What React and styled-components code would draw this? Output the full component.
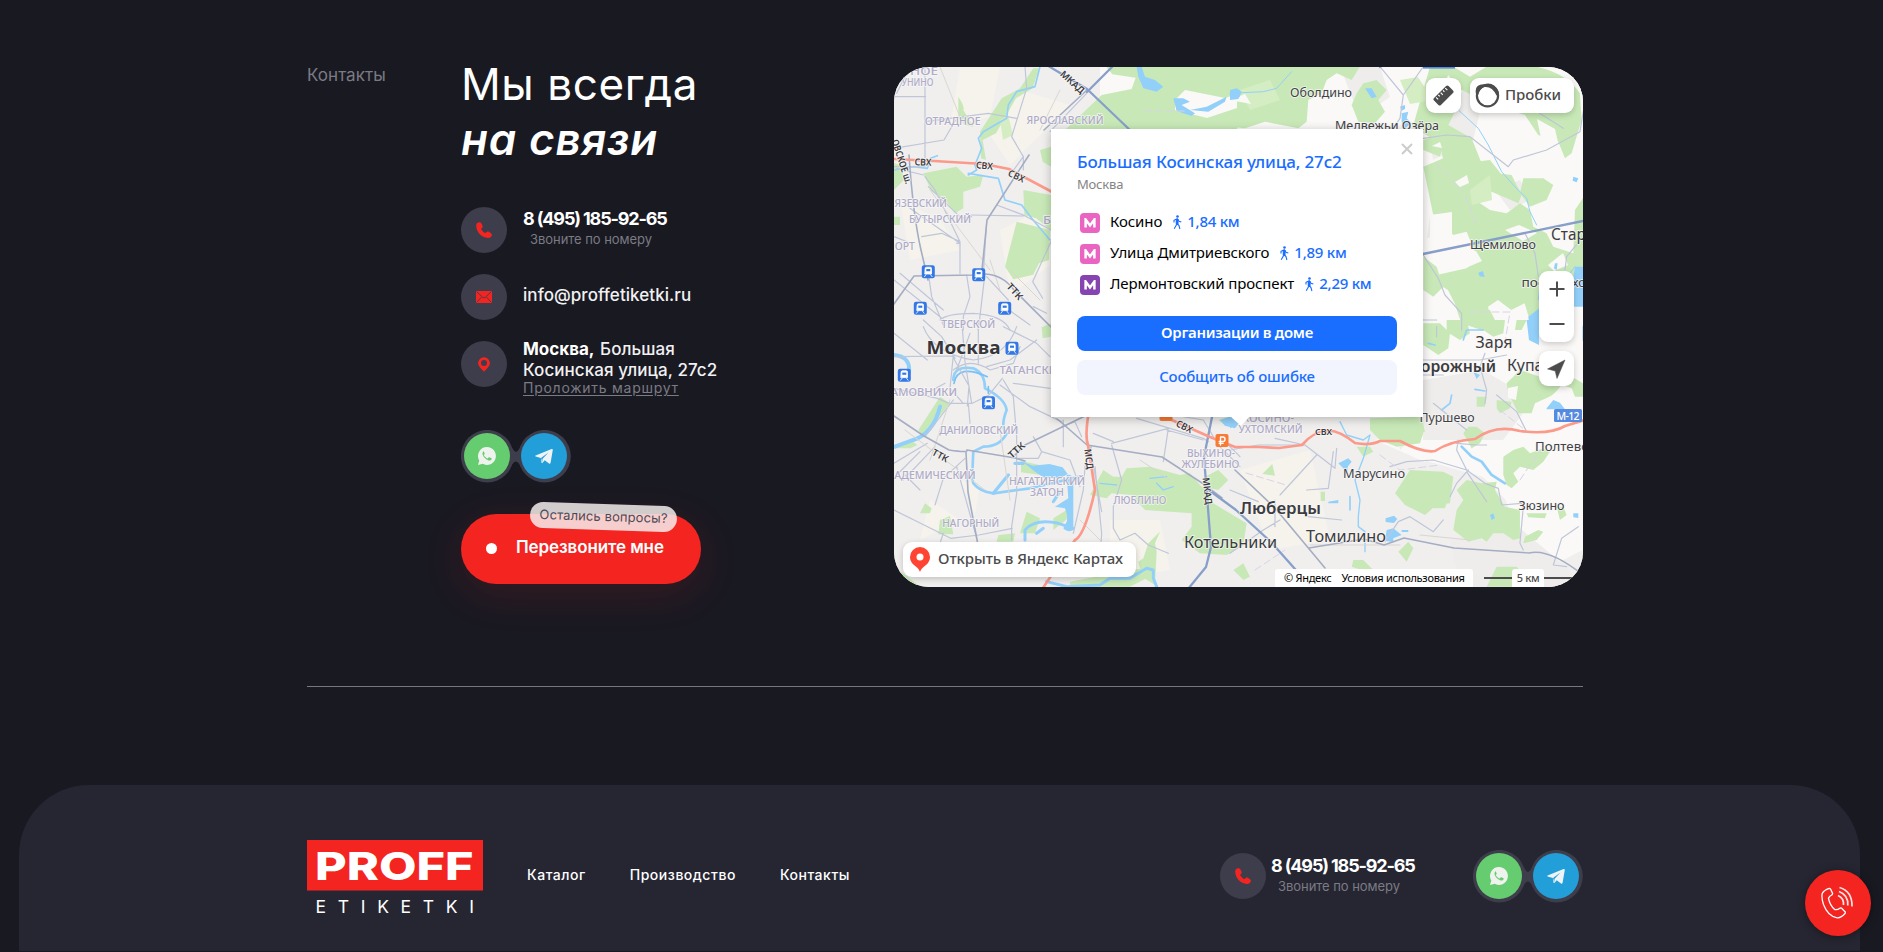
import React from "react";
import styled, { createGlobalStyle } from "styled-components";

const Global = createGlobalStyle`
  * { box-sizing: border-box; }
  body { margin: 0; background: #191922; font-family: Inter, "Liberation Sans", sans-serif; color: #fff; overflow: hidden; }
  h1, p { margin: 0; }
  a { color: inherit; text-decoration: none; }
  svg { display: block; }
`;

const Page = styled.div`
  width: 1883px;
  height: 952px;
  overflow: hidden;
  display: flex;
  flex-direction: column;
`;

const Contacts = styled.section`
  width: 1276px;
  margin-left: 307px;
  padding: 56px 0 99px;
  display: grid;
  grid-template-columns: 154px 433px 689px;
  border-bottom: 1px solid #777780;
`;

const SectionLabel = styled.p`
  margin-top: 9px;
  font-size: 17px;
  line-height: 20px;
  letter-spacing: 0.05px;
  color: #7b7b84;
`;

const Info = styled.div`
  display: flex;
  flex-direction: column;
  align-items: flex-start;
`;

const Heading = styled.h1`
  padding-top: 1px;
  font-size: 44px;
  line-height: 55px;
  font-weight: 400;
  height: 112px;
  white-space: nowrap;
  letter-spacing: 0.6px;
  em { display: block; font-weight: 600; letter-spacing: 0.8px; }
`;

const ContactList = styled.div`
  margin-top: 39px;
  display: flex;
  flex-direction: column;
  gap: 21px;
`;

const ContactRow = styled.div`
  display: flex;
  gap: ${(p) => p.$gap || 16}px;
  height: 46px;
`;

const IconDisc = styled.span`
  flex: none;
  width: 46px;
  height: 46px;
  border-radius: 50%;
  background: #3d3d4b;
  display: flex;
  align-items: center;
  justify-content: center;
`;

const ContactText = styled.div`
  white-space: nowrap;
  margin-top: ${(p) => p.$top || 0}px;
`;

const Phone = styled.a`
  display: block;
  font-size: 18px;
  line-height: 22px;
  font-weight: 700;
  letter-spacing: -1.15px;
`;

const PhoneNote = styled.span`
  display: block;
  padding-left: 7px;
  font-size: 13px;
  line-height: 18px;
  letter-spacing: -0.05px;
  color: #7b7b84;
`;

const ContactLine = styled.a`
  display: block;
  font-size: 17px;
  line-height: 21px;
  font-weight: 500;
  letter-spacing: 0.06px;
  color: #f1f1f2;
  b { font-weight: 700; letter-spacing: 0; margin-right: 1px; color: #fff; }
`;

const RouteLink = styled.a`
  display: block;
  width: max-content;
  margin-top: -1px;
  font-size: 14px;
  line-height: 16px;
  letter-spacing: 0.74px;
  color: #7b7b84;
  text-decoration: underline;
  text-underline-offset: 2px;
`;

const SocialPill = styled.div`
  position: relative;
  display: flex;
  gap: 11px;
  padding: 3px;
  width: 110px;
  height: 53px;
  margin-top: ${(p) => p.$top || 0}px;
`;

const SocialBack = styled.svg`
  position: absolute;
  inset: 0;
`;

const SocialLink = styled.a`
  position: relative;
  width: 46px;
  height: 46px;
  border-radius: 50%;
  background: ${(p) => p.$color};
  display: flex;
  align-items: center;
  justify-content: center;
`;

const CallButton = styled.button`
  position: relative;
  margin-top: 31px;
  width: 240px;
  height: 70px;
  padding: 0 0 4px 25px;
  border: 0;
  border-radius: 35px;
  background: #f42521;
  box-shadow: 0 10px 42px rgba(244, 37, 33, 0.14);
  display: flex;
  align-items: center;
  gap: 19px;
  font: 600 17px Inter, sans-serif;
  letter-spacing: -0.1px;
  color: #fff;
  white-space: nowrap;
`;

const Dot = styled.i`
  width: 11px;
  height: 11px;
  border-radius: 50%;
  background: #fff;
  margin-top: 3px;
`;

const Question = styled.span`
  position: absolute;
  left: 69px;
  top: -10px;
  width: 147px;
  height: 26px;
  border-radius: 13px;
  background: rgba(246, 240, 241, 0.83);
  transform: rotate(1.8deg);
  font-size: 13px;
  font-weight: 400;
  line-height: 24px;
  letter-spacing: 0.1px;
  text-align: center;
  color: #4d4a55;
`;

const MapFrame = styled.div`
  position: relative;
  width: 689px;
  height: 520px;
  margin-top: 11px;
  border-radius: 35px;
  overflow: hidden;
  background: #f0efee;
  font-family: "Noto Sans", "Liberation Sans", sans-serif;
  color: #4c4c4c;
`;

const MapPanel = styled.div`
  position: absolute;
  left: ${(p) => p.$x}px;
  top: ${(p) => p.$y}px;
  width: ${(p) => p.$w}px;
  height: ${(p) => p.$h}px;
  background: #fff;
  border-radius: 9px;
  box-shadow: 0 2px 6px rgba(0, 0, 0, 0.2);
  display: flex;
  flex-direction: ${(p) => (p.$column ? "column" : "row")};
  align-items: center;
  justify-content: ${(p) => (p.$start ? "flex-start" : "space-around")};
  gap: ${(p) => p.$gap || 0}px;
  padding: ${(p) => p.$pad || "0"};
  font-size: 15px;
  font-weight: 500;
  letter-spacing: -0.08px;
  white-space: nowrap;
`;

const PanelText = styled.span`
  margin-top: -3px;
`;

const Balloon = styled.div`
  position: absolute;
  left: 157px;
  top: 62px;
  width: 372px;
  height: 288px;
  padding: 21px 26px;
  background: #fff;
  color: #000;
  box-shadow: 0 2px 9px rgba(0, 0, 0, 0.25);
  display: flex;
  flex-direction: column;
  &::after {
    content: "";
    position: absolute;
    left: 179px;
    bottom: -9px;
    width: 20px;
    height: 10px;
    background: #fff;
    clip-path: polygon(0 0, 100% 0, 55% 100%);
  }
`;

const CloseIcon = styled.svg`
  position: absolute;
  right: 10px;
  top: 14px;
`;

const BalloonTitle = styled.p`
  font-size: 17px;
  line-height: 24px;
  font-weight: 500;
  letter-spacing: -0.14px;
  color: #196dff;
`;

const BalloonCity = styled.p`
  font-size: 13px;
  line-height: 20px;
  color: #848484;
  letter-spacing: -0.2px;
`;

const MetroList = styled.div`
  margin-top: 13px;
`;

const MetroRow = styled.div`
  display: flex;
  align-items: center;
  height: 31px;
  font-size: 15px;
  letter-spacing: -0.1px;
  padding-left: 3px;
`;

const MetroName = styled.span`
  margin: -4px 11px 0 10px;
`;

const MetroMark = styled.span`
  width: 20px;
  height: 20px;
  border-radius: 4px;
  background: ${(p) => p.$color};
  display: flex;
  align-items: center;
  justify-content: center;
`;

const Distance = styled.span`
  color: #196dff;
  font-weight: 500;
  letter-spacing: -0.25px;
  margin: -4px 0 0 5px;
`;

const BalloonButton = styled.a`
  height: 35px;
  width: 320px;
  margin-top: ${(p) => p.$top}px;
  border-radius: 8px;
  background: ${(p) => (p.$primary ? "#196dff" : "#f2f5fe")};
  color: ${(p) => (p.$primary ? "#fff" : "#196dff")};
  font-size: 15px;
  font-weight: ${(p) => (p.$primary ? 600 : 500)};
  letter-spacing: ${(p) => (p.$primary ? -0.3 : -0.2)}px;
  line-height: 33px;
  text-align: center;
`;

const Copyright = styled.div`
  position: absolute;
  left: 381px;
  bottom: 0;
  width: 198px;
  height: 18px;
  padding-left: 9px;
  border-radius: 3px 3px 0 0;
  background: rgba(255, 255, 255, 0.93);
  display: flex;
  gap: 10px;
  color: #000;
  font-size: 11px;
  line-height: 18px;
  letter-spacing: -0.27px;
  white-space: nowrap;
`;

const Scale = styled.div`
  position: absolute;
  left: 590px;
  bottom: 0;
  width: 98px;
  height: 18px;
  display: flex;
  align-items: center;
  font-size: 11px;
  font-weight: 500;
  letter-spacing: -0.4px;
  span { width: 32px; text-align: center; background: #fff; line-height: 18px; border-radius: 3px 3px 0 0; }
  i { height: 2px; width: 28px; background: #4c4c4c; }
`;

const Footer = styled.footer`
  flex: none;
  margin: 98px 23px 0 19px;
  height: 166px;
  padding: 55px 277px 0 288px;
  border-radius: 70px 70px 0 0;
  background: #262632;
  display: flex;
  align-items: flex-start;
`;

const Nav = styled.nav`
  display: flex;
  gap: 44px;
  margin: 25px 0 0 44px;
  a { font-size: 14px; line-height: 20px; font-weight: 500; letter-spacing: 0.53px; white-space: nowrap; }
`;

const FooterPhone = styled.div`
  width: 196px;
  margin: 13px 57px 0 auto;
`;

const CallFab = styled.button`
  position: fixed;
  left: 1805px;
  top: 870px;
  width: 66px;
  height: 66px;
  padding: 0;
  border: 0;
  border-radius: 50%;
  background: #f42521;
  box-shadow: 0 1px 9px rgba(0, 0, 0, 0.4);
  display: flex;
  align-items: center;
  justify-content: center;
`;

const PhoneIcon = () => (
  <svg width="18" height="18" viewBox="0 0 18 18" fill="#f42521">
    <path d="M4.6 1.2C2.8 1 1.3 2.3 1.2 4.3c-.1 6.6 5.200 12.300 11.700 12.600 2.100 0 3.700-1.200 4-3 .1-.5 0-.9-.4-1.200l-2.600-1.900c-.6-.4-1.300-.4-1.900 0l-1.300 1c-.4.3-.8.3-1.200 0A10 10 0 0 1 6.300 8.500c-.2-.4-.1-.8.2-1.100l.9-.9c.4-.5.5-1.100.2-1.700L6.100 2C5.800 1.400 5.300 1.200 4.600 1.200z" />
  </svg>
);

const MailIcon = () => (
  <svg width="16" height="12" viewBox="0 0 16 12">
    <rect width="16" height="12" rx="1" fill="#f42521" />
    <path d="M.8.8 6.700 6.300q1.300 1.100 2.600 0L15.200.8M.8 11.200l4.600-5M15.200 11.200l-4.600-5" fill="none" stroke="#3d3d4b" strokeWidth=".9" />
  </svg>
);

const PinIcon = () => (
  <svg width="12" height="15" viewBox="0 0 12 15">
    <path d="M6 .3a5.800 5.800 0 0 0-5.900 5.800C.1 9.700 3.800 12 6 14.800 8.200 12 11.900 9.700 11.900 6.100A5.800 5.800 0 0 0 6 .3zM6 8.900a3 3 0 1 1 0-6 3 3 0 0 1 0 6z" fill="#f42521" />
  </svg>
);

const Socials = ({ top }) => (
  <SocialPill $top={top}>
    <SocialBack width="110" height="53">
      <g fill="#3d3d4b">
        <circle cx="26.200" cy="26.200" r="26.300" />
        <circle cx="83.500" cy="26.200" r="26.300" />
        <path d="M47 11Q53 22 55 22t8-11v31q-5-10-8-10.500T47 42z" />
      </g>
    </SocialBack>
    <SocialLink $color="#66cc70">
      <svg width="18" height="18" viewBox="0 0 18 18">
        <path d="M9 .1A8.900 8.900 0 0 0 1.300 13.500L0 18l4.700-1.200A8.900 8.900 0 1 0 9 .1z" fill="#eef3ee" />
        <path d="M5.600 4.500c-1.100.8-1.400 2-.9 3.300 1 2.700 3.200 4.900 5.900 5.700 1.300.3 2.500-.1 3-1.200.2-.5.200-1-.1-1.100l-2.100-1c-.3-.1-.6-.1-.8.2l-.7.9c-.2.2-.4.2-.7.100-1.500-.7-2.600-1.700-3.300-3.100-.1-.3 0-.4.1-.6l.6-.8c.1-.2.1-.4 0-.6l-.8-1.700c-.1-.3-.7-.3-1.200-.1z" fill="#66cc70" />
      </svg>
    </SocialLink>
    <SocialLink $color="#229ed9">
      <svg width="18" height="15" viewBox="0 0 18 15">
        <path d="M.6 6.600 16.600.1c.8-.3 1.300.2 1.200.9L15.600 13.800c-.2.800-.8 1.200-1.600.7L9.700 11.300l-2.100 2.400c-.5.500-1 .4-1.100-.3l-.7-4.500L.7 7.600C.1 7.400 0 6.900.6 6.600z" fill="#eef3f6" />
        <path d="M6 9 13.500 3.600 7.600 9.700l-.4 3.300z" fill="#229ed9" />
      </svg>
    </SocialLink>
  </SocialPill>
);

const PhoneBlock = ({ gap, top }) => (
  <ContactRow $gap={gap}>
    <IconDisc><PhoneIcon /></IconDisc>
    <ContactText $top={top}>
      <Phone href="#">8 (495) 185-92-65</Phone>
      <PhoneNote>Звоните по номеру</PhoneNote>
    </ContactText>
  </ContactRow>
);

const Walker = () => (
  <svg width="9" height="15" viewBox="0 0 9 15" fill="none" stroke="#196dff" strokeWidth="1.100">
    <circle cx="4.500" cy="1.500" r="1.300" fill="#196dff" stroke="none" />
    <path d="M1 7.500V5.300L4.300 3.800 6 6.200l2.300.9M4.300 4l-.4 5L1.200 13.800M4 8.500l2 2 .9 3.500" />
    <path d="M3.300 4.500h1.700v4.300H3.300z" fill="#196dff" />
  </svg>
);

const stations = [
  { name: "Косино", km: "1,84 км", color: "#e965c1" },
  { name: "Улица Дмитриевского", km: "1,89 км", color: "#e965c1" },
  { name: "Лермонтовский проспект", km: "2,29 км", color: "#8544b0" },
];

/* kind, centre x, baseline y, width, text, rotation */
const labels = [
  ["area", 924, 75, 28, "НОЕ"],
  ["area", 917.500, 86.300, 32, "УНИНО"],
  ["area", 952.700, 125.300, 56, "ОТРАДНОЕ"],
  ["area", 1065, 124, 77, "ЯРОСЛАВСКИЙ"],
  ["area", 917, 206.700, 60, "НЯЗЕВСКИЙ"],
  ["area", 940, 223.300, 62, "БУТЫРСКИЙ"],
  ["area", 901, 250, 28, "ПОРТ"],
  ["area", 1052, 224, 18, "БО"],
  ["area", 968.300, 328, 54, "ТВЕРСКОЙ"],
  ["area", 1033, 374, 67, "ТАГАНСКИЙ"],
  ["area", 920.500, 396, 73, "ХАМОВНИКИ"],
  ["area", 978.700, 434, 79, "ДАНИЛОВСКИЙ"],
  ["area", 928, 478.700, 95, "АКАДЕМИЧЕСКИЙ"],
  ["area", 1047, 484.700, 76, "НАГАТИНСКИЙ"],
  ["area", 1047, 495.700, 34, "ЗАТОН"],
  ["area", 1140, 503.700, 53, "ЛЮБЛИНО"],
  ["area", 970.800, 527, 57, "НАГОРНЫЙ"],
  ["area", 1211, 457, 48, "ВЫХИНО-"],
  ["area", 1210.500, 468, 58, "ЖУЛЕБИНО"],
  ["area", 1268, 422, 52, "КОСИНО-"],
  ["area", 1270.500, 433, 64, "УХТОМСКИЙ"],
  ["town", 1321, 96.500, 62, "Оболдино"],
  ["town", 1387, 129.800, 104, "Медвежьи Озёра"],
  ["town", 1503, 248.500, 66, "Щемилово"],
  ["town", 1535, 286.500, 27, "пос."],
  ["town", 1582, 286.500, 20, "хоз"],
  ["town", 1447, 422.300, 55, "Пуршево"],
  ["town", 1374, 478, 62, "Марусино"],
  ["town", 1541.500, 510, 46, "Зюзино"],
  ["town", 1562, 450.700, 54, "Полтево"],
  ["city", 1577, 239.500, 52, "Старая"],
  ["city", 1494, 348, 37, "Заря"],
  ["city", 1539, 370.700, 64, "Купавна"],
  ["city", 1230.500, 547.500, 93, "Котельники"],
  ["city", 1346, 542.300, 80, "Томилино"],
  ["bold", 1418.500, 371.500, 155, "Железнодорожный"],
  ["bold", 1280.500, 514, 81, "Люберцы"],
  ["capital", 963.500, 354, 74, "Москва"],
  ["road", 923, 165.500, 17, "СВХ", 2],
  ["road", 984.500, 169, 17, "СВХ", 5],
  ["road", 1016.500, 179.500, 17, "СВХ", 25],
  ["road", 1184.500, 430, 17, "СВХ", 27],
  ["road", 1323.500, 435, 17, "СВХ"],
  ["road", 1072.500, 85.500, 29, "МКАД", 42],
  ["road", 902, 165, 46, "ОВСКОЕ ш.", 72],
  ["road", 1015, 295, 19, "ТТК", 48],
  ["road", 940.500, 459, 17, "ТТК", 28],
  ["road", 1016.500, 453.500, 19, "ТТК", -42],
  ["road", 1089, 462.500, 20, "МСД", 82],
  ["road", 1207.500, 494.500, 27, "МКАД", 83],
];

const labelStyle = {
  area: { size: 11, weight: 500, fill: "#aeaac7" },
  town: { size: 13, weight: 400, fill: "#424247" },
  city: { size: 15.800, weight: 400, fill: "#3c3c41" },
  bold: { size: 15.800, weight: 600, fill: "#3c3c41" },
  capital: { size: 18.500, weight: 700, fill: "#36363b" },
  road: { size: 9.600, weight: 600, fill: "#3c3c42" },
};

const MapLabel = ({ item: [kind, x, y, w, text, angle = 0] }) => {
  const s = labelStyle[kind];
  const pivot = kind === "road" ? y - 3.500 : y;
  return (
    <text
      x={x} y={y} textAnchor="middle" textLength={w} lengthAdjust="spacingAndGlyphs"
      transform={angle ? `rotate(${angle} ${x} ${pivot})` : undefined}
      fontSize={s.size} fontWeight={s.weight} fill={s.fill}
      stroke="#f8f7f6" strokeWidth="1.800" strokeOpacity=".75" paintOrder="stroke" strokeLinejoin="round"
    >
      {text}
    </text>
  );
};

const Train = ({ x, y }) => (
  <g transform={`translate(${x} ${y})`}>
    <rect x="-6.500" y="-6.500" width="13" height="13" rx="2.200" fill="#3478e5" />
    <path d="M-3.200-3.200q0-1.300 1.300-1.300h3.800q1.300 0 1.300 1.300v5.500h-6.400zM-2.300 3l-1.500 2M2.300 3l1.500 2" fill="#fff" stroke="#fff" strokeWidth=".8" />
    <path d="M-2-2.700h4v2.200h-4z" fill="#3478e5" />
  </g>
);

const trains = [[928.300, 271.700], [978.700, 274.700], [920.300, 308.300], [1004.700, 308.300], [1012, 348.300], [904.300, 375.300], [988.500, 402.700]];

const MapArt = () => (
  <svg width="689" height="520" viewBox="894 67 689 520" strokeLinejoin="round" strokeLinecap="round">
    <rect x="894" y="67" width="689" height="520" fill="#f0efee" />

    {/* open land and built-up tints */}
    <g fill="#faf9f7">
      <path d="M1100 67h483v300h-483zM1423 367h160v130l-40 40-60-60-70-20z" />
      <path d="M1480 430l60 10 43 50v60l-40 20-30-50zM1375 440l50-14 30 14-30 22z" />
    </g>
    <g fill="#f5f3ec">
      <path d="M960 67l40 0-10 50-40 10zM1020 90l50 15-60 60-20-30zM900 200l40 20 20 30-50 10zM1000 230l50-25v60l-40 30z" />
      <path d="M930 500l30 20-40 20zM960 480l20 5-5 30zM1110 520l50 0 10 50-60 10zM1240 470l70-20 20 90-60 10z" />
    </g>
    <g fill="#efedec">
      <path d="M1423 110h30l10-20 20 10-10 40-40 20zM1423 380l60-10 50 30-30 40-80 0zM1430 215l22 0v18l-25 5zM1495 190l25-10 10 20-20 10zM1340 67h40l10 30-30 20zM1450 540l60-20 60 50v17h-110zM1390 400l30 30-20 20z" />
    </g>

    {/* forests and parks */}
    <g fill="#c8e9b7">
      <g transform="translate(890 60) scale(.3333)">
        <path d="M640 20l420 0v130l-20 60H525l110-105 90-18 12-34-70-10-20-25zM12 310l20 5 10 45-30 30zM100 340l100-20 30 30 50-5-10 35-50 15v50l-25 15-30-40-40-25zM380 485l100 25-3 90-30 10-17 34-60 14-25-38zM400 390l83 15v105l-45-35-35-10zM450 270l33-10v60l-25-15zM205 110q20 30 15 40l30 50-25-5-20-20zM270 215l65-100 55-30 40-60 18 0-20 60-50 30-60 105-40 20 10 60-15-5zM12 470l18 0v25l-18 0z" />
      </g>
      <g transform="translate(1230 60) scale(.3333)">
        <path d="M0 20h390l-25 40-45-20-30 20-15 40-40 20-5 65-25 20-100-20-60 20-45-5zM400 70l40-10 30 30-25 30 20 35-30 35-50-5-20-50 15-35zM600 20h70l50 30 50-30h150q90 20 130 80l5 80-30 100-20 15-20-50-60-20-40-60-100-30-100-50-30-40-20 40 40 70-20 40 70 40 40 100 80 10 30 60-10 25-80-35-60 5-20-50-60-20-15-80-50-30-40 10zM580 240l30-10 30 20-10 40-50-20zM580 320l60-25 60 15 80-10 40 50 0 30-50 10-20 40 30 20 50 10 40-30 30 20 10 50 40 20 20 40 60 20 5-130 30-45 44 0v50l-29 35 29 80v-40 135l-60 20-60 25-20 60-20 30-50-20-15-50-40 20-40-30-30 20 10 40-30 30-60-20-20-60-20-40-34-20v-25l90-20 35-30-15-30-20-50-40 10-20-20-30 10zM880 355l60 0 30 20-20 45-50 20-30-40zM580 590l40 30 20 60-30 30-30-20zM700 755l80-5 30 60h-60l-50-25z" />
      </g>
      <g transform="translate(890 320) scale(.3333)">
        <path d="M150 230l30 20-80 100-15-20zM12 375l50-15 20 15-20 10h-50zM105 550l20 15-5 15h-30zM150 600l30-12 10 55-45 0zM410 575l40 20-15 45-45 0zM375 640l-5 25-50 0 5-20zM455 22l28-12v40l-25 5zM393 422l130 30-20 20-110-15zM490 595l40-25 10 20-50 40zM640 450l30 20 25 0 15-25 70-5 90 25 30-5 30 35 30 25 10 30 100 60-10 65-50 30-80-5-55-40 30-40 0-40-140-10-40-45-60-5-15 15-50-10zM945 470l40-20 30 30-30 30-45-10zM775 670l30-30 5-5-15 35 5 25-5 100-40-25-10-45 15-10zM12 740l80 60h-70z" />
        <path d="M540 785l180-35 50-5 0 30-50 25h-180zM985 300l30-10 20 10-30 15z" />
      </g>
      <g transform="translate(1230 320) scale(.3333)">
        <path d="M580 10h50l30 30-5 45-30 20-45-30zM740 0l85 0-5 40-30 10-30-20zM650 0l60 0 10 40-30 20-40-25zM420 330l0-35 130-5 30 50-10 30-70 10-50-20zM520 290h55l10 45-40 15zM380 380l40 0 10 15-30 15zM830 190l40-40 60 20h40l20-20 70 40v40l-25 0-10-25-30-10-25 30-55 25-10 30h-40l-30-60zM740 230l30 0-5 30-25 0zM800 240l45 5-5 20-30 15-10-15zM700 340l15-20 25 0 25 20-15 30-25 15zM820 410l30-20 30-10 20 20 40-15 20 10-20 30-30 25-40-10-20 20 15 25-20 20-15-10-10-30zM540 450l100 5 30 15-10 80-40 5-35 30-60-30-30-35zM590 535l65 0-10 30-35 0zM680 510l30-30 45 10 45-5-5 25 30 50 45 10 0 85-20 5-30-20-30 0-20 25-15-10-40 10-45-35 10-60 20-30zM890 580l60 0-5 15-50-3zM885 650l40-20 15 5-20 25-40 10zM535 665l15 20-20 40-25-30zM370 720l30 0 30 30-20 5-45-15zM980 560l20 0 10 25-20 15zM800 740l60 0 30 30-30 30h-90zM10 750l30-20 20 40-20 10zM97 462l30-30 8 35zM272 515l13 0v28l-13 0zM860 0l30 0-15 30-20 0z" />
      </g>
    </g>
    <g fill="#d5edc3">
      <path d="M1470 190l20-15 2 25-20 5zM1400 80l18-3 15 23-23 4zM1240 90l30-10 10 20-30 10zM1000 120l8-5 5 20-10 5z" />
    </g>
    <g fill="#faf9f7">
      <path d="M1455 182l12-7 2 8-9 4zM1430 215l22-3v25l-22 4zM1550 397l8-7 9 7-9 6zM1490 105l20 10 18 26 14 2-5-24 18 10 5 22-13 12-30-8zM1432 146l8-4 2 6zM1508 388l10-2-2 14-8-2zM1230 100l15-6 6 10zM1175 100l10-10 40 8 12-4v14l-30 10-32-8z" />
      <path d="M1505 230l14-5 18 8-14 8zM1548 265l15-12 5 12-14 6zM1460 255l16-4 6 10-14 6z" />
    </g>

    {/* rivers, lakes */}
    <g fill="#92d0fa">
      <g transform="translate(890 60) scale(.3333)">
        <path d="M740 20l15 0 10 30 30 10 25 20-20 15-40-10-15-35zM850 115l30 0 20 10-25 10 40 25-10 8-45-15zM900 150l50-10 60-30-5 15-50 30zM1020 95l30-5v20l-30 5z" />
      </g>
      <g transform="translate(1230 60) scale(.3333)">
        <path d="M405 85l20 0 15 25-15 5zM510 140l15-5 0 12-10 5zM515 160l20-5-5 20 15 15-20 15-10-20zM0 90l20-5 15 10-10 22-25 3zM1035 620l25 0v120l-30 0-15-20 10-30zM895 770l33-25v65h-28zM1030 350l15 5-5 12-12-5zM975 610l8 0-3 20-8-5zM745 638l14-5 5 18-15-2z" />
      </g>
      <g transform="translate(890 320) scale(.3333)">
        <path d="M398 425l30 12 50-5 40 10 15 20-20 12-50 0-30-20zM530 465q20-5 20 20v145q-20 10-30-5l10-20q5-15-5-40l-30-5 40-25zM990 300l30-10 30 15-15 20-30-8z" />
      </g>
      <g transform="translate(1230 320) scale(.3333)">
        <path d="M890 0l37 0v75l-30-15zM0 290l20 0 10 20-30 15zM325 430l30-15 10 10-20 25zM325 540l-30 5v5l30 0zM467 595l25-8 10 10-10 12-25-3zM470 630l20-5 25 20-25 10 0 12-25-5zM515 630l20 0v6h-20zM780 585l10-5 5 15-10 5zM950 265l20-25 20 8 15 20h-55zM730 155l20 10-10 12zM1030 580l15 0v14l-15-2z" />
      </g>
    </g>
    <g fill="none" stroke="#92d0fa" strokeWidth="3">
      <g transform="translate(890 60) scale(.3333)">
        <path d="M450 20l-15 60-55 15-25 40-5 40-70 40-15 20 10 30-20 50 5 15-25 15M12 330l60-10 40 5 10-30 20-8M235 340l90 15 20 65 50 15 30 40 55 65" strokeWidth="5" />
      </g>
      <g transform="translate(1230 60) scale(.3333)">
        <path d="M0 100l100-5 40-10 45-50M635 100l50 50 60 55 30 50 40 80 35 40 40 40 10 40 20 40M1005 660l30-40M930 680l-5 40" />
      </g>
      <g transform="translate(890 320) scale(.3333)">
        <path d="M12 105q50 5 45 50M150 260q-20 80-80 100l-55 20" strokeWidth="12" />
        <path d="M190 180q0-45 60-35 35 15 35 60 60 30 65 65-20 50 0 70-20 40-70 40l-30 15q-5 90 0 95 20 25 60 30l110-15 150-35" strokeWidth="8" />
        <path d="M310 520l45-55M375 430l25 0" strokeWidth="10" />
        <path d="M192 190q10-60 100-20M295 200v20" stroke="#7cbff5" strokeWidth="5" />
        <path d="M405 660v-30q30-35 100-20l45 15M440 640l20-15M470 785l60 15 100-5 30-20 60 0 50-30 20 5v25l10 25M490 545l20-30" strokeWidth="9" />
        <path d="M630 490l50 5M780 475l50-5M800 490l20 20 30-10" strokeWidth="4" />
      </g>
      <g transform="translate(1230 320) scale(.3333)">
        <path d="M330 305l20 40 50 15 20-15-20 70-25 65 15 60-5 50v30l20 15v60" strokeWidth="4" />
        <path d="M695 380l30 30 30 15 30 40 40 25" strokeWidth="8" />
        <path d="M635 270l25-20 5-25M700 60l10-30 50 0M595 70l20 5M350 420l0 40M360 530v40M735 208l30 5M1060 20v40" strokeWidth="5" />
      </g>
    </g>

    {/* minor roads */}
    <g fill="none" stroke="#bfc6d8" strokeWidth="3.600">
      <g transform="translate(890 60) scale(.3333)">
        <path d="M105 20l0 300M12 110h95M12 265l150-25 35-60M105 215v-30l190-25 85 15M405 20l5 65-45 145 35 60v40M400 290L360 345M12 320h90M100 345l-80-20M105 350l30 40 75 155-55-25-60 10M210 545v95M115 380l100 95 30-5M60 445l150 105-10 0M320 435l80 30 83 45M240 465l160 3M290 485l-10 160M590 100L480 215M290 650l65 70M285 640l-20 170M115 640l10 70 35 85M230 645l10 65-20 60v40M30 640l130 110M12 660l150 120M150 780q20-20 100-20 90 5 110 50M350 745l70 50M483 545l-55 120 30 50M430 740l40 20M12 530l50 20M60 20l-40 80" />
      </g>
      <g transform="translate(1230 60) scale(.3333)">
        <path d="M580 20l-60 85-70-85M520 105l-10 70-20 30M580 235l70-10 70 5 115 90 15-20 100-30 100-55 10-60M1000 205l-110-70M850 60l90 50M885 520l30 60 10 70M1060 530l-50 60-5 40M580 585l45 70 20 50 50 55v50" />
      </g>
      <g transform="translate(890 320) scale(.3333)">
        <path d="M12 110l175-2 50 90-5 60M12 40l100 80M100 0l55 50 40 65M190 105l-10 100 40 45M165 190l-55 30M12 205l130 30 35 15 70 0 50-25 40-50M215 0l10 125 20 125M265 0v130M240 40l-40 110M190 150q50-40 110 0l70-20 20-50M100 20q30 80 150 100 100-10 130-100M290 140l70-20 80-60M340 20l100 50 40 40M340 180l30 50 10 120 0 170-15 100 0 40M370 190l110 15M330 195l90 65 95 45M190 240l-85 110M235 250l5 60M20 465l70-70M12 430l100-60M12 570l170 85 85-10 100-20M40 480l95-100M90 510l-45-45M135 555l25-80 65-60M200 440l60 215M430 350l25 45-10 20h-60M160 640l-10 30M455 395l85 25 30 80M520 300v80M605 380l-20 60-5 70-30 130M600 380l35 195M615 440l20 200-5 90M515 320l40-15 20 45M665 370l170-45-15 100M665 375l30 105-25 80v65l20 35 45-20 40 35 60 25M830 330l110 30M740 295l200 60 15 10M610 340L670 365M880 290l60 10 30 50M980 370l70 70M1000 360l50 50M690 670v60" />
      </g>
      <g transform="translate(1230 320) scale(.3333)">
        <path d="M0 390l85-15 140 0 90 70 5-60M260 405l-110 120M310 395l-15 110-65 5M0 510l85 35M225 375l-90-20M0 700l100-70 50-30M135 540l0 80M680 370l60 5 30 0M715 450l-35 40-20 40M480 440l50-15 80-5 100 30 55 40 40 15 10 50 60-5M880 560l-10 110 10 20M710 450l-30-60 5-30M765 100l-15 40 20 70-5 40M580 0l40 0M800 225l60 50 30 60M1010 740l-40-5 25-80 50-35M770 545l-60-90M235 590l100 10M620 20v30" />
        <path d="M610 250l100 80M640 600l-30 35-70-45-35 15-40 60M580 165l60 0M580 120l170 0 80-15" />
      </g>
    </g>
    <g fill="none" stroke="#d8d3ea" strokeDasharray="7 4">
      <path d="M1144 111h40M1436 163l28 30 12 30M1470 312l40 0-5 30M1246 473l40 12M1380 455l20 15 40-5M1520 480l20-30M1255 570l30-20M1500 410l25 20" strokeWidth="1" />
    </g>
    <g fill="none" stroke="#d9d6d2" strokeWidth="1">
      <path d="M930 190l60 80M940 67l20 50M1060 90l-20 40M905 430l80 60M950 400l-20 60M1000 430l10 70M990 260l10 30M1010 270l30 30M1080 520l30 30M1140 460l30 20M1310 545h90M1420 535l50 5" />
    </g>

    {/* main roads */}
    <g fill="none" stroke="#a4adc3">
      <path d="M909 155q4 60 12 95l7 30M1029 155l-42 65-5 50M1044 130l43-40M894 304l20-28 60-1q25-5 40 15l40 40v32M894 416l30 20 25 14q20 3 18 0l48 8 10 3M1015 455l10-10 62-30 30-18M1057 419l5 4 25 22 75 12 40 26 20 15M966 452l2 40 10 53M1235 470l40 38 50 60" strokeWidth="1.600" />
      <path d="M1309 548l55-9 20 6 20-7 50 10 75 5q20-5 54 22" strokeWidth="1.400" />
    </g>
    <g fill="none" stroke="#879fc9" strokeWidth="2.300">
      <path d="M1045 64l42 25 45 43M1112 67l-25 25M1212 417l-8 40 7 90-5 20-18 22M1206 488l30 22 35 32 40 45" />
      <path d="M1423 254l160-33M1380 67l10-7" />
    </g>

    {/* toll ring */}
    <g fill="none" stroke="#fb9a8b" strokeWidth="2.700">
      <path d="M894 159l40 2 50 3 25 5 45 24M1088 417q-3 20 0 28l7 45q-10 45-20 50l-40 60M1165 417l45 20 25 10h24l20 1 23-3q12-14 25-14 10-2 28 12 15 3 25-2h20q22 12 35 10 15-10 40-12 20-15 45-8 30 4 45-5l23-7" />
    </g>

    {labels.map((item, i) => <MapLabel key={i} item={item} />)}
    {trains.map(([x, y], i) => <Train key={i} x={x} y={y} />)}

    <g>
      <rect x="1215.500" y="434" width="13" height="13" rx="2" fill="#f77a35" />
      <rect x="1159.500" y="408" width="13" height="13" rx="2" fill="#f77a35" />
      <path d="M1220.500 445v-8h2.500q2 0 2 2.200t-2 2.200h-3.800M1219.200 443.300h4" fill="none" stroke="#fff" strokeWidth="1.400" />
      <rect x="1554" y="409" width="28" height="13" rx="1.500" fill="#568ae0" />
      <text x="1568" y="419.500" textAnchor="middle" textLength="23" fontSize="10.500" fontWeight="500" fill="#fff">М-12</text>
      <rect x="1423" y="66" width="32" height="2.600" fill="#568ae0" />
    </g>
  </svg>
);

const MapWidget = () => (
  <MapFrame>
    <MapArt />
    <MapPanel $x={532} $y={11} $w={35} $h={35}>
      <svg width="21" height="21" viewBox="0 0 21 21">
        <g transform="rotate(-45 10.500 10.500)">
          <rect x=".2" y="5.600" width="20.600" height="9.800" rx="1.800" fill="#4c4c4c" />
          <path d="M4 6.500v3M7.200 6.500v2M10.500 6.500v3M13.800 6.500v2M17 6.500v3" stroke="#fff" strokeWidth="1.100" />
        </g>
      </svg>
    </MapPanel>
    <MapPanel $x={576} $y={11} $w={104} $h={35} $start $gap={5} $pad="0 0 0 5px">
      <svg width="25" height="25" viewBox="0 0 25 25">
        <circle cx="12.500" cy="12.800" r="10.600" fill="none" stroke="#4c4c4c" strokeWidth="2.200" />
        <path d="M1 11Q-1 1 9 1.200q10-2.700 14.500 7 .8 3 .5 6l-2.600-2Q17 3 9.500 4 5 5.500 3 12z" fill="#4c4c4c" />
      </svg>
      <PanelText>Пробки</PanelText>
    </MapPanel>
    <MapPanel $x={645} $y={204} $w={35} $h={71} $column>
      <svg width="16" height="16" viewBox="0 0 16 16"><path d="M8 .5v15M.5 8h15" stroke="#4c4c4c" strokeWidth="2" /></svg>
      <svg width="16" height="16" viewBox="0 0 16 16"><path d="M.5 8h15" stroke="#4c4c4c" strokeWidth="2" /></svg>
    </MapPanel>
    <MapPanel $x={645} $y={284} $w={35} $h={35}>
      <svg width="20" height="20" viewBox="0 0 20 20"><path d="M18 1 10 19.500 8.200 12 .5 10z" fill="#4c4c4c" stroke="#4c4c4c" strokeWidth=".5" /></svg>
    </MapPanel>
    <MapPanel $x={9} $y={475} $w={233} $h={35} $start $gap={8} $pad="0 0 0 7px">
      <svg width="20" height="25" viewBox="0 0 20 25">
        <path d="M10 0a10 10 0 0 0-10 10c0 5.500 4 8 7 10.500 1.500 1.300 2.300 2.600 3 4.500.7-1.900 1.500-3.200 3-4.500 3-2.500 7-5 7-10.500A10 10 0 0 0 10 0z" fill="#ff4433" />
        <circle cx="10" cy="10" r="3.500" fill="#fff" />
      </svg>
      <PanelText>Открыть в Яндекс Картах</PanelText>
    </MapPanel>
    <Copyright><span>© Яндекс</span><span>Условия использования</span></Copyright>
    <Scale><i /><span>5 км</span><i /></Scale>
    <Balloon>
      <CloseIcon width="12" height="12" viewBox="0 0 12 12"><path d="M1 1l10 10M11 1 1 11" stroke="#ccc" strokeWidth="2" /></CloseIcon>
      <BalloonTitle>Большая Косинская улица, 27с2</BalloonTitle>
      <BalloonCity>Москва</BalloonCity>
      <MetroList>
        {stations.map((s) => (
          <MetroRow key={s.name}>
            <MetroMark $color={s.color}>
              <svg width="12" height="10" viewBox="0 0 12 10"><path d="M1.600 9.500V1.500L6 7.500l4.400-6v8" fill="none" stroke="#fff" strokeWidth="2.500" /></svg>
            </MetroMark>
            <MetroName>{s.name}</MetroName>
            <Walker />
            <Distance>{s.km}</Distance>
          </MetroRow>
        ))}
      </MetroList>
      <BalloonButton $top={16} $primary>Организации в доме</BalloonButton>
      <BalloonButton $top={9}>Сообщить об ошибке</BalloonButton>
    </Balloon>
  </MapFrame>
);

const Logo = () => (
  <svg width="176" height="76" viewBox="0 0 176 76" fontFamily="Inter, sans-serif" fill="#fff">
    <rect width="176" height="50.500" fill="#f42521" />
    <text x="8" y="39.500" fontSize="38.500" fontWeight="800" textLength="158.500" lengthAdjust="spacingAndGlyphs">PROFF</text>
    <text x="8.500" y="73" fontSize="17.500" fontWeight="400" textLength="158.500" lengthAdjust="spacing">ETIKETKI</text>
  </svg>
);

export default function App() {
  return (
    <Page>
      <Global />
      <Contacts>
        <SectionLabel>Контакты</SectionLabel>
        <Info>
          <Heading>Мы всегда<em>на связи</em></Heading>
          <ContactList>
            <PhoneBlock top={1} />
            <ContactRow>
              <IconDisc><MailIcon /></IconDisc>
              <ContactText $top={11}><ContactLine href="#">info@proffetiketki.ru</ContactLine></ContactText>
            </ContactRow>
            <ContactRow>
              <IconDisc><PinIcon /></IconDisc>
              <ContactText $top={-2}>
                <ContactLine as="div"><b>Москва,</b> Большая<br />Косинская улица, 27с2</ContactLine>
                <RouteLink href="#">Проложить маршрут</RouteLink>
              </ContactText>
            </ContactRow>
          </ContactList>
          <Socials top={43} />
          <CallButton>
            <Dot />
            Перезвоните мне
            <Question>Остались вопросы?</Question>
          </CallButton>
        </Info>
        <MapWidget />
      </Contacts>
      <Footer>
        <Logo />
        <Nav>
          <a href="#">Каталог</a>
          <a href="#">Производство</a>
          <a href="#">Контакты</a>
        </Nav>
        <FooterPhone><PhoneBlock gap={5} top={2} /></FooterPhone>
        <Socials top={10} />
      </Footer>
      <CallFab>
        <svg width="34" height="34" viewBox="0 0 34 34" fill="none" stroke="#fff" strokeWidth="1.300" strokeLinejoin="round">
          <path d="M1.200 7.500q1.500-3.300 7-5.200l1.200.5 2.200 4.600-.5 1.300q-3 1.600-3.600 3.600 1.200 6.600 6.200 11.200 2.600.6 5.600-1.600l1.300.3 3.700 3.800-.1 1.300q-4.200 4.800-8 4.500Q7 30.500 2.500 18.500.3 12 1.200 7.500z" />
          <path d="M17 9.500q6 2.500 5.500 9.500M18 5.500q9.500 3.500 8.800 14M18.500 1.500Q31.500 5.500 31 20.500" stroke="#ffe3e2" strokeWidth="1.700" />
        </svg>
      </CallFab>
    </Page>
  );
}
